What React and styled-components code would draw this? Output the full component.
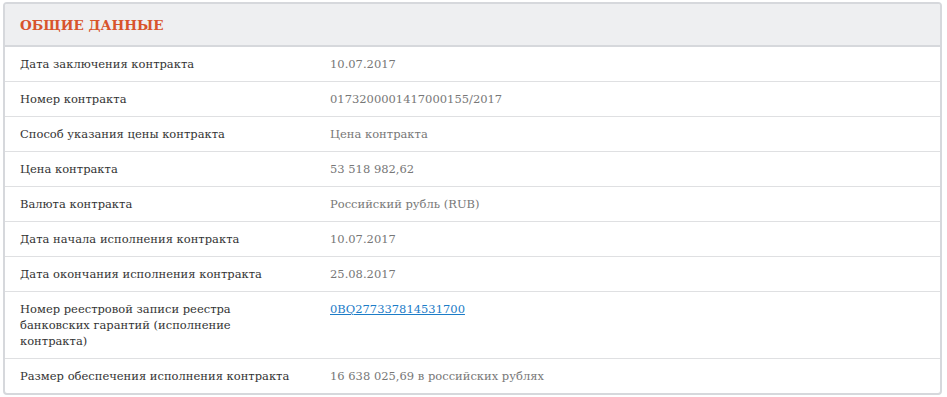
import React from 'react';
import styled, { createGlobalStyle } from 'styled-components';

const GlobalStyle = createGlobalStyle`
   body{
      margin: 0;
      background: #fff;
      font-family: "DejaVu Serif", "Liberation Serif", serif;
   }
`;

const Page = styled.div`
   padding: 2px 5px 3px 3px;
`;

const Panel = styled.section`
   border: 2px solid #d6d8dc;
   border-radius: 4px;
   overflow: hidden;
   background: #fff;
`;

const PanelHeader = styled.header`
   background: #eeeff1;
   border-bottom: 2px solid #d6d8dc;
   height: 41px;
   display: flex;
   align-items: center;
   padding: 0 15px;

   h2{
      margin: 0;
      font-size: 13.5px;
      font-weight: bold;
      color: #d8542c;
   }
`;

const Row = styled.div`
   display: grid;
   grid-template-columns: 310px 1fr;
   padding: 9px 15px;
   line-height: 16px;
   font-size: 11.5px;
   border-top: ${p => p.first ? 'none' : '1px solid #dfe0e2'};
`;

const Label = styled.div`
   color: #333;
   padding-right: 16px;
`;

const Value = styled.div`
   color: #777;

   a{
      color: #1c7cc7;
      text-decoration: underline;
   }
`;

const rows = [
   ['Дата заключения контракта', '10.07.2017'],
   ['Номер контракта', '0173200001417000155/2017'],
   ['Способ указания цены контракта', 'Цена контракта'],
   ['Цена контракта', '53 518 982,62'],
   ['Валюта контракта', 'Российский рубль (RUB)'],
   ['Дата начала исполнения контракта', '10.07.2017'],
   ['Дата окончания исполнения контракта', '25.08.2017'],
   [<>Номер реестровой записи реестра<br/>банковских гарантий (исполнение<br/>контракта)</>, <a href="#">0BQ277337814531700</a>],
   ['Размер обеспечения исполнения контракта', '16 638 025,69 в российских рублях'],
];

const App = () => {
   return (
      <Page>
         <GlobalStyle/>
         <Panel>
            <PanelHeader>
               <h2>ОБЩИЕ ДАННЫЕ</h2>
            </PanelHeader>
            {rows.map(([label, value], i) => (
               <Row key={i} first={i === 0}>
                  <Label>{label}</Label>
                  <Value>{value}</Value>
               </Row>
            ))}
         </Panel>
      </Page>
   );
};

export default App;
